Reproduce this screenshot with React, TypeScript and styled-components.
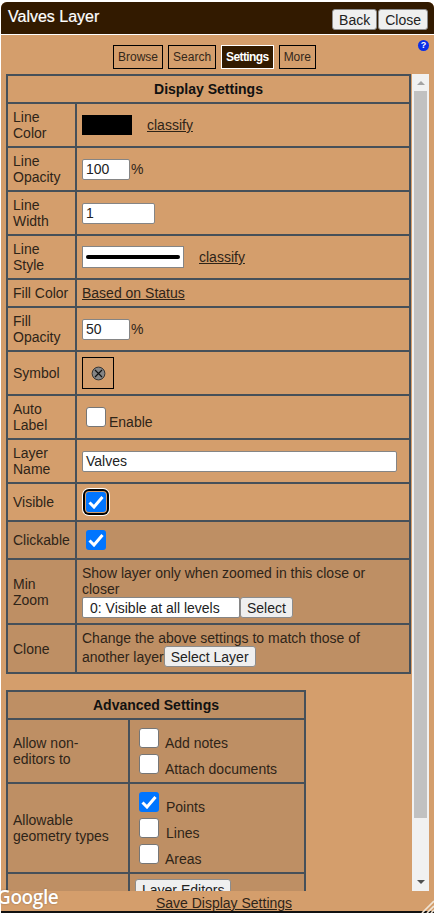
import React from "react";
import styled, { createGlobalStyle } from "styled-components";

const Global = createGlobalStyle`
  html, body { margin: 0; padding: 0; width: 434px; height: 913px; overflow: hidden; background: #fff; }
  #root { width: 434px; height: 913px; }
  * { box-sizing: border-box; }
`;

const Page = styled.div`
  position: relative;
  width: 434px;
  height: 913px;
  display: flex;
  flex-direction: column;
  font-family: "Liberation Sans", Arial, sans-serif;
  font-size: 14px;
  line-height: 16px;
  color: #2e2418;
  padding: 2px 0 0 1px;
  background: #fff;
`;

const Panel = styled.div`
  flex: 1;
  min-height: 0;
  display: flex;
  flex-direction: column;
  background: #d49e6c;
  border-radius: 6px 6px 0 0;
  overflow: hidden;
  border-bottom: 2px solid #111;
`;

const TitleBar = styled.header`
  height: 33px;
  flex: none;
  background: #321a00;
  border-bottom: 1px solid #fff;
  display: flex;
  align-items: center;
  justify-content: space-between;
  padding: 0 6px 0 7px;
`;

const Title = styled.h1`
  margin: 0 0 2px;
  font-size: 16px;
  font-weight: 400;
  color: #fff;
  -webkit-text-stroke: 0.2px #fff;
`;

const ButtonRow = styled.div`
  display: flex;
  gap: 1px;
  margin-top: 3px;
`;

const Btn = styled.button`
  height: 21px;
  padding: 0 6px;
  font: 14px "Liberation Sans", Arial, sans-serif;
  color: #222;
  background: #efefef;
  border: 1px solid #8c8c8c;
  border-radius: 3px;
`;

const TabBar = styled.nav`
  position: relative;
  flex: none;
  height: 39px;
  display: flex;
  justify-content: center;
  align-items: flex-start;
  gap: 5px;
  padding: 10px 6px 0 0;
`;

const Tab = styled.div<{ $active?: boolean }>`
  height: 24px;
  padding: 0 4px;
  display: flex;
  align-items: center;
  font-size: 12px;
  border: 1px solid ${(p) => (p.$active ? "#fff" : "#000")};
  background: ${(p) => (p.$active ? "#321a00" : "transparent")};
  color: ${(p) => (p.$active ? "#fff" : "#33271a")};
  font-weight: ${(p) => (p.$active ? 700 : 400)};
  letter-spacing: ${(p) => (p.$active ? "-0.6px" : "0")};
`;

const Help = styled.div`
  position: absolute;
  right: 5px;
  top: 5px;
  width: 11px;
  height: 11px;
  border-radius: 50%;
  background: #0a2fe8;
  color: #fff;
  font-size: 9px;
  line-height: 11px;
  font-weight: 700;
  text-align: center;
`;

const ScrollWrap = styled.div`
  flex: 1;
  min-height: 0;
  display: flex;
  padding-left: 5px;
`;

const Scroller = styled.div`
  width: 406px;
  overflow: hidden;
`;

const Scrollbar = styled.div`
  width: 17px;
  flex: none;
  background: #f1f1f1;
  display: flex;
  flex-direction: column;
  align-items: center;
`;

const Arrow = styled.div<{ $down?: boolean }>`
  flex: none;
  width: 0;
  height: 0;
  border-left: 4px solid transparent;
  border-right: 4px solid transparent;
  ${(p) =>
    p.$down
      ? "border-top: 4px solid #505050; margin: auto 0 7px;"
      : "border-bottom: 4px solid #a3a3a3; margin: 7px 0 6px;"}
`;

const Thumb = styled.div`
  width: 13px;
  flex: none;
  height: 727px;
  background: #c1c1c1;
`;

const Table = styled.table<{ $width: number; $dark?: boolean }>`
  width: ${(p) => p.$width}px;
  table-layout: fixed;
  border-collapse: collapse;
  border: 2px solid #465059;
  ${(p) => (p.$dark ? "background: #be8f64; margin-top: 16px;" : "")}
`;

const Head = styled.th`
  height: 28px;
  padding: 0;
  border: 2px solid #465059;
  font-size: 14px;
  font-weight: 700;
  color: #111;
  text-align: center;
`;

const Row = styled.tr<{ $dark?: boolean; $h: number }>`
  height: ${(p) => p.$h}px;
  background: ${(p) => (p.$dark ? "#be8f64" : "transparent")};
`;

const Label = styled.td`
  padding: 0 0 0 5px;
  border: 2px solid #465059;
  vertical-align: middle;
`;

const Cell = styled.td`
  padding: 0 5px;
  border: 2px solid #465059;
  vertical-align: middle;
`;

const Inline = styled.div<{ $gap?: number }>`
  display: flex;
  align-items: center;
  gap: ${(p) => p.$gap ?? 0}px;
`;

const Link = styled.span`
  text-decoration: underline;
  color: #2e2418;
`;

const Swatch = styled.div`
  width: 50px;
  height: 20px;
  background: #000;
`;

const TextBox = styled.div<{ $w: number; $inset?: number }>`
  width: ${(p) => p.$w}px;
  height: 21px;
  background: #fff;
  border: 1px solid #858585;
  border-radius: 2px;
  padding: 0 ${(p) => p.$inset ?? 3}px;
  display: flex;
  align-items: center;
  color: #222;
  font-size: 14px;
`;

const LineSample = styled.div`
  width: 102px;
  height: 22px;
  background: #fff;
  border: 1px solid #858585;
  display: flex;
  align-items: center;
  padding: 0 3px;
`;

const LineBar = styled.div`
  height: 4px;
  width: 100%;
  background: #000;
  border-radius: 2px;
`;

const SymbolBox = styled.div`
  width: 32px;
  height: 32px;
  border: 1px solid #000;
  display: flex;
  align-items: center;
  justify-content: center;
`;

const Check = styled.span<{ $on?: boolean; $focus?: boolean }>`
  flex: none;
  display: inline-flex;
  align-items: center;
  justify-content: center;
  width: 20px;
  height: 20px;
  border-radius: 3px;
  background: ${(p) => (p.$on ? "#0075ff" : "#fff")};
  border: ${(p) => (p.$on ? "none" : "1px solid #767676")};
  ${(p) =>
    p.$focus
      ? "box-shadow: 0 0 0 1px #d49e6c, 0 0 0 3px #000, 0 0 0 4px #fff;"
      : ""}
`;

const CheckGroup = styled.div`
  padding-bottom: 6px;
`;

const CheckRow = styled.div<{ $gap?: number; $h?: number }>`
  display: flex;
  align-items: flex-end;
  gap: ${(p) => p.$gap ?? 3}px;
  height: ${(p) => p.$h ?? 26}px;
  padding-left: 4px;
`;

const CheckText = styled.span`
  margin-bottom: -3px;
`;

const SmallBtn = styled.button`
  height: 21px;
  padding: 0 6px;
  font: 14px "Liberation Sans", Arial, sans-serif;
  color: #222;
  background: #efefef;
  border: 1px solid #8c8c8c;
  border-radius: 3px;
  flex: none;
`;

const Footer = styled.footer`
  flex: none;
  height: 20px;
  display: flex;
  justify-content: center;
  padding: 4px 0 0 13px;
`;

const GoogleMark = styled.div`
  position: absolute;
  left: -3px;
  top: 885px;
  font: 600 19px/24px "Open Sans", "Liberation Sans", sans-serif;
  color: #fff;
  letter-spacing: -0.4px;
  text-shadow: 0 0 2px rgba(0, 0, 0, 0.3);
`;

const Grip = styled.svg`
  position: absolute;
  right: 0;
  bottom: 0;
`;

const Tick = () => (
  <svg width="16" height="14" viewBox="0 0 16 14" fill="none">
    <path d="M1.5 7.5 L6 12 L14.5 2" stroke="#fff" strokeWidth="3" />
  </svg>
);

const Box = ({ on, focus }: { on?: boolean; focus?: boolean }) => (
  <Check $on={on} $focus={focus}>{on && <Tick />}</Check>
);

export default function App() {
  return (
    <>
      <Global />
      <Page>
        <Panel>
          <TitleBar>
            <Title>Valves Layer</Title>
            <ButtonRow>
              <Btn>Back</Btn>
              <Btn>Close</Btn>
            </ButtonRow>
          </TitleBar>
          <TabBar>
            <Tab>Browse</Tab>
            <Tab>Search</Tab>
            <Tab $active>Settings</Tab>
            <Tab>More</Tab>
            <Help>?</Help>
          </TabBar>
          <ScrollWrap>
            <Scroller>
              <Table $width={405}>
                <colgroup>
                  <col width={69} />
                  <col />
                </colgroup>
                <tbody>
                  <tr>
                    <Head colSpan={2}>Display Settings</Head>
                  </tr>
                  <Row $h={44}>
                    <Label>Line<br />Color</Label>
                    <Cell>
                      <Inline $gap={15}>
                        <Swatch />
                        <Link>classify</Link>
                      </Inline>
                    </Cell>
                  </Row>
                  <Row $h={44}>
                    <Label>Line<br />Opacity</Label>
                    <Cell>
                      <Inline $gap={1}>
                        <TextBox $w={48}>100</TextBox>%
                      </Inline>
                    </Cell>
                  </Row>
                  <Row $h={44}>
                    <Label>Line<br />Width</Label>
                    <Cell>
                      <TextBox $w={73}>1</TextBox>
                    </Cell>
                  </Row>
                  <Row $h={44}>
                    <Label>Line<br />Style</Label>
                    <Cell>
                      <Inline $gap={15}>
                        <LineSample>
                          <LineBar />
                        </LineSample>
                        <Link>classify</Link>
                      </Inline>
                    </Cell>
                  </Row>
                  <Row $h={28}>
                    <Label>Fill Color</Label>
                    <Cell>
                      <Link>Based on Status</Link>
                    </Cell>
                  </Row>
                  <Row $h={44}>
                    <Label>Fill<br />Opacity</Label>
                    <Cell>
                      <Inline $gap={1}>
                        <TextBox $w={48}>50</TextBox>%
                      </Inline>
                    </Cell>
                  </Row>
                  <Row $h={44}>
                    <Label>Symbol</Label>
                    <Cell>
                      <SymbolBox>
                        <svg width="15" height="15" viewBox="0 0 15 15">
                          <circle cx="7.5" cy="7.5" r="6.4" fill="#858585" stroke="#333" strokeWidth="1" />
                          <path d="M4 4 L11 11 M11 4 L4 11" stroke="#111" strokeWidth="1.2" />
                        </svg>
                      </SymbolBox>
                    </Cell>
                  </Row>
                  <Row $h={44}>
                    <Label>Auto<br />Label</Label>
                    <Cell>
                      <CheckRow $h={20}>
                        <Box />
                        <CheckText>Enable</CheckText>
                      </CheckRow>
                    </Cell>
                  </Row>
                  <Row $h={44}>
                    <Label>Layer<br />Name</Label>
                    <Cell>
                      <TextBox $w={315}>Valves</TextBox>
                    </Cell>
                  </Row>
                  <Row $h={38}>
                    <Label>Visible</Label>
                    <Cell>
                      <CheckRow $h={20}>
                        <Box on focus />
                      </CheckRow>
                    </Cell>
                  </Row>
                  <Row $h={38} $dark>
                    <Label>Clickable</Label>
                    <Cell>
                      <CheckRow $h={20}>
                        <Box on />
                      </CheckRow>
                    </Cell>
                  </Row>
                  <Row $h={65} $dark>
                    <Label>Min<br />Zoom</Label>
                    <Cell>
                      Show layer only when zoomed in this close or<br />closer
                      <Inline>
                        <TextBox $w={158} $inset={7}>0: Visible at all levels</TextBox>
                        <SmallBtn>Select</SmallBtn>
                      </Inline>
                    </Cell>
                  </Row>
                  <Row $h={49} $dark>
                    <Label>Clone</Label>
                    <Cell>
                      Change the above settings to match those of
                      <Inline>
                        another layer
                        <SmallBtn>Select Layer</SmallBtn>
                      </Inline>
                    </Cell>
                  </Row>
                </tbody>
              </Table>
              <Table $width={300} $dark>
                <colgroup>
                  <col width={122} />
                  <col />
                </colgroup>
                <tbody>
                  <tr>
                    <Head colSpan={2}>Advanced Settings</Head>
                  </tr>
                  <Row $h={64}>
                    <Label>Allow non-<br />editors to</Label>
                    <Cell>
                      <CheckGroup>
                        <CheckRow $h={26} $gap={6}>
                          <Box />
                          <CheckText>Add notes</CheckText>
                        </CheckRow>
                        <CheckRow $h={26} $gap={6}>
                          <Box />
                          <CheckText>Attach documents</CheckText>
                        </CheckRow>
                      </CheckGroup>
                    </Cell>
                  </Row>
                  <Row $h={90}>
                    <Label>Allowable<br />geometry types</Label>
                    <Cell>
                      <CheckGroup>
                        <CheckRow $h={26} $gap={7}>
                          <Box on />
                          <CheckText>Points</CheckText>
                        </CheckRow>
                        <CheckRow $h={26} $gap={7}>
                          <Box />
                          <CheckText>Lines</CheckText>
                        </CheckRow>
                        <CheckRow $h={26} $gap={6}>
                          <Box />
                          <CheckText>Areas</CheckText>
                        </CheckRow>
                      </CheckGroup>
                    </Cell>
                  </Row>
                  <Row $h={33}>
                    <Label />
                    <Cell>
                      <SmallBtn>Layer Editors</SmallBtn>
                    </Cell>
                  </Row>
                </tbody>
              </Table>
            </Scroller>
            <Scrollbar>
              <Arrow />
              <Thumb />
              <Arrow $down />
            </Scrollbar>
          </ScrollWrap>
          <Footer>
            <Link>Save Display Settings</Link>
          </Footer>
        </Panel>
        <GoogleMark>Google</GoogleMark>
        <Grip width="14" height="14" viewBox="0 0 14 14">
          <path d="M2 14 L14 2 M7 14 L14 7 M11 14 L14 11" stroke="#f0e4d4" strokeWidth="1.6" />
        </Grip>
      </Page>
    </>
  );
}
